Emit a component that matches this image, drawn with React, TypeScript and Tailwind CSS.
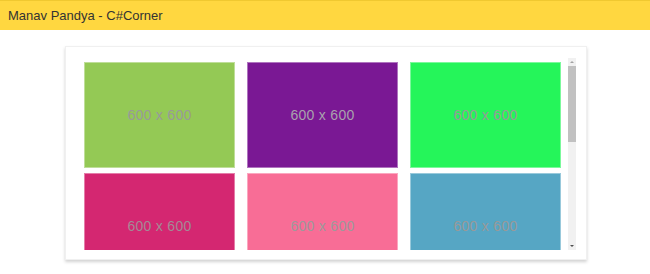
const tiles = [
  { bg: "bg-[#94c955]", text: "text-[#999999]" },
  { bg: "bg-[#7a1894]", text: "text-[#a9a3ad]" },
  { bg: "bg-[#25f55a]", text: "text-[#999999]" },
  { bg: "bg-[#d42771]", text: "text-[#a38a95]" },
  { bg: "bg-[#f86d96]", text: "text-[#9d9a9b]" },
  { bg: "bg-[#56a6c4]", text: "text-[#999999]" },
];

const Scrollbar = () => (
  <div className="flex h-full w-[8px] flex-col items-center bg-[#f1f1f1]">
    <div className="flex h-[8px] w-full items-center justify-center">
      <div className="h-0 w-0 border-x-[2px] border-b-[2px] border-x-transparent border-b-[#a3a3a3]" />
    </div>
    <div className="h-[76px] w-full bg-[#c1c1c1]" />
    <div className="flex-1" />
    <div className="flex h-[8px] w-full items-center justify-center">
      <div className="h-0 w-0 border-x-[2px] border-t-[2px] border-x-transparent border-t-[#505050]" />
    </div>
  </div>
);

export default function App() {
  return (
    <div className="h-[274px] w-[650px] overflow-hidden bg-white font-['Liberation_Sans',Arial,sans-serif]">
      <header className="flex h-[30px] items-center border-t border-[#f0c830] bg-[#ffd740] px-2 text-[13px] text-[#333]">
        Manav Pandya - C#Corner
      </header>
      <div className="ml-[65px] mt-[16px] h-[214px] w-[522px] border border-[#f0f0f0] bg-white pl-[12px] pt-[11px] shadow-[0_2px_3px_rgba(0,0,0,0.18)]">
        <div className="flex h-[192px] w-[498px]">
          <div className="flex-1 overflow-hidden pl-[6px] pt-[4px]">
            <div className="grid grid-cols-[151px_151px_151px] gap-x-[12px] gap-y-[5px]">
              {tiles.map((t, i) => (
                <div
                  key={i}
                  className={`flex h-[106px] items-center justify-center border border-white/40 ${t.bg}`}
                >
                  <span className={`text-[14px] tracking-[0.3px] ${t.text}`}>
                    600 x 600
                  </span>
                </div>
              ))}
            </div>
          </div>
          <Scrollbar />
        </div>
      </div>
    </div>
  );
}
